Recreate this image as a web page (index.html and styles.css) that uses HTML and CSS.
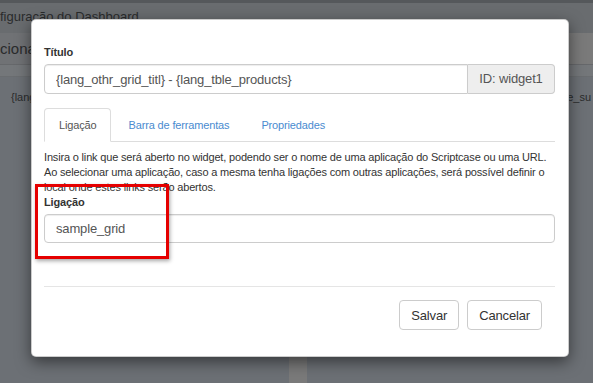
FILE: index.html
```html
<!DOCTYPE html>
<html lang="pt">
<head>
  <meta charset="UTF-8">
  <title>Configuração do Dashboard</title>
  <link rel="stylesheet" href="styles.css">
</head>
<body>
  <!-- Página de fundo (escurecida pelo modal) -->
  <div class="page">
    <div class="page-top"></div>
    <div class="page-header">figuração do Dashboard</div>
    <div class="page-toolbar">
      <span class="toolbar-left">ciona</span>
      <span class="toolbar-right"></span>
    </div>
    <div class="page-sub"></div>
    <div class="page-body">
      <div class="col col-left">{lang_othr_grid_titl}</div>
      <div class="col col-mid"></div>
      <div class="col col-right">e_su</div>
    </div>
  </div>

  <!-- Modal -->
  <div class="modal">
    <div class="modal-body">
      <label class="field-label">Título</label>
      <div class="input-group">
        <input type="text" class="form-control" value="{lang_othr_grid_titl} - {lang_tble_products}">
        <span class="addon">ID: widget1</span>
      </div>

      <ul class="tabs">
        <li class="active">Ligação</li>
        <li>Barra de ferramentas</li>
        <li>Propriedades</li>
      </ul>

      <p class="help">Insira o link que será aberto no widget, podendo ser o nome de uma aplicação do Scriptcase ou uma URL. Ao selecionar uma aplicação, caso a mesma tenha ligações com outras aplicações, será possível definir o local onde estes links serão abertos.</p>
      <label class="field-label">Ligação</label>
      <input type="text" class="form-control full" value="sample_grid">

      <div class="highlight"></div>
    </div>
    <div class="modal-footer">
      <button type="button" class="btn">Salvar</button>
      <button type="button" class="btn">Cancelar</button>
    </div>
  </div>
</body>
</html>
```

FILE: styles.css
```css
* {
  margin: 0;
  padding: 0;
  box-sizing: border-box;
}
body {
  font-family: 'Liberation Sans', Arial, sans-serif;
  background: #6c7075;
  width: 593px;
  height: 383px;
  overflow: hidden;
  position: relative;
}
/* Fundo */
.page {
  height: 383px;
  display: flex;
  flex-direction: column;
}
.page-top {
  height: 3px;
  background: #55585b;
}
.page-header {
  height: 30px;
  background: #696c6f;
  color: #2a2b2c;
  font-size: 13px;
  line-height: 28px;
}
.page-toolbar {
  height: 32px;
  display: flex;
  background: #707275;
  border-bottom: 1px solid #66686b;
}
.toolbar-left {
  width: 300px;
  color: #2a2b2c;
  font-size: 15px;
  line-height: 31px;
}
.toolbar-right {
  flex: 1;
  background: #7a7a7a;
}
.page-sub {
  height: 12px;
  background: #74777a;
  border-bottom: 1px solid #6a6d70;
}
.page-body {
  flex: 1;
  display: flex;
}
.col {
  font-size: 11px;
  color: #2a2b2c;
  padding-top: 14px;
  overflow: hidden;
  white-space: nowrap;
}
.col-left {
  width: 289px;
  padding-left: 11px;
}
.col-mid {
  width: 18px;
  background: #7a7a7a;
}
.col-right {
  flex: 1;
  text-align: right;
  padding-right: 2px;
}
/* Modal */
.modal {
  position: absolute;
  left: 31px;
  top: 19px;
  width: 538px;
  height: 338px;
  background: #fff;
  border-radius: 5px;
  border: 1px solid rgba(0,0,0,0.2);
  box-shadow: 0 5px 15px rgba(0,0,0,0.5);
  letter-spacing: -0.15px;
}
.modal-body {
  position: relative;
  padding: 25px 13px 0 12px;
  height: 266px;
}
.field-label {
  display: block;
  font-size: 11px;
  line-height: 14px;
  font-weight: bold;
  color: #333;
  margin-bottom: 5px;
}
.input-group {
  display: flex;
  height: 30px;
}
.form-control {
  height: 30px;
  border: 1px solid #ccc;
  border-radius: 4px;
  padding: 0 11px;
  font-family: inherit;
  font-size: 13px;
  letter-spacing: -0.15px;
  color: #555;
  box-shadow: inset 0 1px 1px rgba(0,0,0,0.075);
}
.input-group .form-control {
  flex: 1;
  border-radius: 4px 0 0 4px;
}
.addon {
  width: 87px;
  background: #eee;
  border: 1px solid #ccc;
  border-left: none;
  border-radius: 0 4px 4px 0;
  font-size: 13px;
  color: #555;
  line-height: 28px;
  text-align: center;
}
.full {
  display: block;
  width: 100%;
  height: 29px;
}
.tabs {
  list-style: none;
  display: flex;
  margin-top: 14px;
  border-bottom: 1px solid #ddd;
  height: 34px;
}
.tabs li {
  font-size: 11px;
  color: #4a8bd0;
  padding: 0 14px;
  line-height: 33px;
  margin-right: 2px;
  border: 1px solid transparent;
  border-radius: 4px 4px 0 0;
}
.tabs li.active {
  color: #555;
  background: #fff;
  border-color: #ddd #ddd transparent;
  height: 34px;
}
.help {
  font-size: 11px;
  letter-spacing: -0.17px;
  color: #333;
  line-height: 15px;
  margin-top: 8px;
}
.highlight {
  position: absolute;
  left: 3px;
  top: 164px;
  width: 134px;
  height: 75px;
  border: 3px solid #e50000;
  box-shadow: 1px 2px 4px rgba(0,0,0,0.35);
}
.modal-footer {
  margin: 0 13px 0 12px;
  border-top: 1px solid #e5e5e5;
  padding-top: 13px;
  display: flex;
  justify-content: flex-end;
  gap: 8px;
  padding-right: 13px;
}
.btn {
  height: 30px;
  padding: 0 11px;
  background: #fff;
  border: 1px solid #ccc;
  border-radius: 4px;
  font-family: inherit;
  font-size: 13px;
  letter-spacing: -0.15px;
  color: #333;
}
```
